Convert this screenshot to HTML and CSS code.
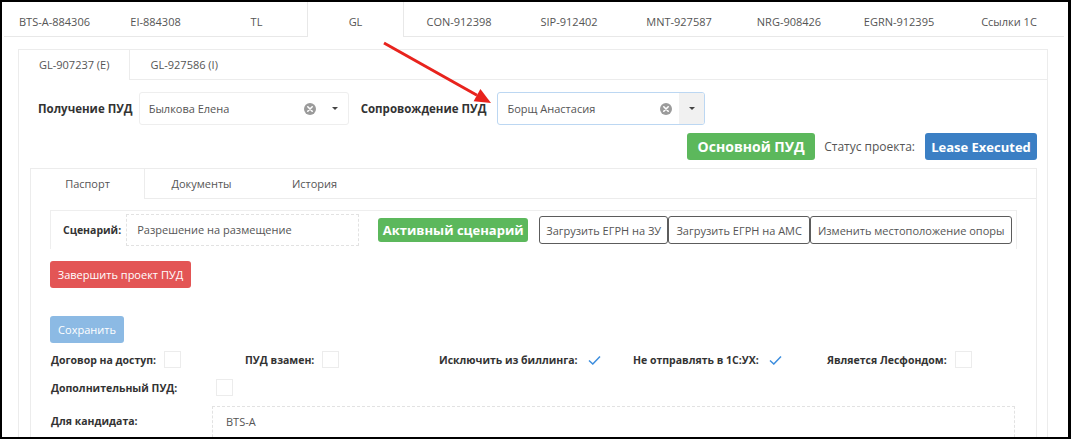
FILE: index.html
```html
<!DOCTYPE html>
<html lang="ru">
<head>
<meta charset="utf-8">
<title>ПУД</title>
<link rel="stylesheet" href="styles.css">
</head>
<body>
<div class="frame">
  <div class="top-tabs">
    <div class="tab t-a">BTS-A-884306</div>
    <div class="tab t-a">EI-884308</div>
    <div class="tab t-a">TL</div>
    <div class="tab t-gl active">GL</div>
    <div class="tab t-b">CON-912398</div>
    <div class="tab t-b">SIP-912402</div>
    <div class="tab t-b">MNT-927587</div>
    <div class="tab t-b">NRG-908426</div>
    <div class="tab t-b">EGRN-912395</div>
    <div class="tab t-b">Ссылки 1С</div>
  </div>

  <div class="sub-box">
    <div class="sub-tabs">
      <div class="stab active">GL-907237 (E)</div>
      <div class="stab">GL-927586 (I)</div>
    </div>

    <div class="assign-row">
      <span class="lbl">Получение ПУД</span>
      <div class="select">
        <span class="sel-text">Былкова Елена</span>
        <span class="clear"><svg width="12" height="12" viewBox="0 0 12 12"><circle cx="6" cy="6" r="6" fill="#9b9b9b"/><path d="M3.8 3.8 L8.2 8.2 M8.2 3.8 L3.8 8.2" stroke="#fff" stroke-width="1.6" stroke-linecap="round"/></svg></span>
        <span class="caret-box"><span class="caret"></span></span>
      </div>
      <span class="lbl lbl2">Сопровождение ПУД</span>
      <div class="select focus">
        <span class="sel-text">Борщ Анастасия</span>
        <span class="clear"><svg width="12" height="12" viewBox="0 0 12 12"><circle cx="6" cy="6" r="6" fill="#9b9b9b"/><path d="M3.8 3.8 L8.2 8.2 M8.2 3.8 L3.8 8.2" stroke="#fff" stroke-width="1.6" stroke-linecap="round"/></svg></span>
        <span class="caret-box grey"><span class="caret"></span></span>
      </div>
    </div>

    <div class="status-row">
      <span class="btn btn-main">Основной ПУД</span>
      <span class="status-lbl">Статус проекта:</span>
      <span class="btn btn-lease">Lease Executed</span>
    </div>

    <div class="panel">
      <div class="panel-tabs">
        <div class="ptab active">Паспорт</div>
        <div class="ptab">Документы</div>
        <div class="ptab">История</div>
      </div>
      <div class="panel-body">
        <div class="scenario">
          <span class="sc-label">Сценарий:</span>
          <span class="sc-input">Разрешение на размещение</span>
          <span class="btn btn-active">Активный сценарий</span>
          <div class="out-group">
            <span class="btn-out w1">Загрузить ЕГРН на ЗУ</span>
            <span class="btn-out w2">Загрузить ЕГРН на АМС</span>
            <span class="btn-out w3">Изменить местоположение опоры</span>
          </div>
        </div>

        <div class="btn-row"><span class="btn btn-red">Завершить проект ПУД</span></div>
        <div class="btn-row save-row"><span class="btn btn-save">Сохранить</span></div>

        <div class="flags">
          <div class="flag"><span class="flbl">Договор на доступ:</span><span class="cb"></span></div>
          <div class="flag"><span class="flbl">ПУД взамен:</span><span class="cb"></span></div>
          <div class="flag"><span class="flbl">Исключить из биллинга:</span><span class="cb checked"><svg width="13" height="10" viewBox="0 0 13 10"><path d="M1 5.5 L4.8 9 L12 1.5" fill="none" stroke="#3d8ede" stroke-width="1.5"/></svg></span></div>
          <div class="flag"><span class="flbl">Не отправлять в 1С:УХ:</span><span class="cb checked"><svg width="13" height="10" viewBox="0 0 13 10"><path d="M1 5.5 L4.8 9 L12 1.5" fill="none" stroke="#3d8ede" stroke-width="1.5"/></svg></span></div>
          <div class="flag"><span class="flbl">Является Лесфондом:</span><span class="cb"></span></div>
        </div>

        <div class="field-row">
          <span class="flbl wide">Дополнительный ПУД:</span><span class="cb cb-extra"></span>
        </div>

        <div class="field-row cand-row">
          <span class="flbl wide">Для кандидата:</span><span class="cand-input">BTS-A</span>
        </div>
      </div>
    </div>
  </div>

  <svg class="arrow" width="600" height="140" viewBox="0 0 600 140">
    <line x1="382" y1="41" x2="475" y2="93.2" stroke="#e8231d" stroke-width="3"/>
    <polygon points="489,101 471.6,99.3 478.4,87.1" fill="#e8231d"/>
  </svg>
</div>
</body>
</html>
```

FILE: styles.css
```css
body {
  margin: 0;
  background: #fff;
}

.frame {
  position: relative;
  width: 1071px;
  height: 439px;
  box-sizing: border-box;
  border: 2px solid #000;
  border-right-width: 3px;
  overflow: hidden;
  background: #fff;
  font-family: "Open Sans", "Noto Sans", sans-serif;
  font-size: 11px;
  color: #555;
}

/* top tabs */
.top-tabs {
  display: flex;
  margin: 0 4px 0 2px;
  height: 34px;
  border-bottom: 1px solid #e8e8e8;
}

.tab {
  text-align: center;
  line-height: 30px;
  padding-top: 5px;
  box-sizing: border-box;
  height: 34px;
  white-space: nowrap;
}

.t-a { width: 101px; }
.t-gl { width: 97px; }
.t-b { flex: 1; }

.tab.active {
  border-left: 1px solid #e8e8e8;
  border-right: 1px solid #e8e8e8;
  background: #fff;
  height: 35px;
}

/* sub box */
.sub-box {
  margin: 12px 20px 0 16px;
  border: 1px solid #ececec;
  border-bottom: none;
  height: 400px;
}

.sub-tabs {
  display: flex;
  height: 29px;
  border-bottom: 1px solid #ececec;
}

.stab {
  padding: 0 20px;
  line-height: 29px;
  white-space: nowrap;
}

.stab.active {
  border-right: 1px solid #ececec;
  background: #fff;
  height: 30px;
}

/* assign row */
.assign-row {
  display: flex;
  align-items: center;
  margin-top: 12px;
  padding-left: 19px;
  height: 33px;
}

.lbl {
  font-weight: 700;
  font-size: 11.5px;
  color: #333;
  margin-right: 6px;
  white-space: nowrap;
}

.lbl2 {
  margin-left: 12px;
  margin-right: 11px;
}

.select {
  display: flex;
  align-items: center;
  width: 210px;
  height: 33px;
  box-sizing: border-box;
  border: 1px solid #eeeeee;
  border-radius: 3px;
}

.select.focus {
  width: 208px;
  border-color: #bcd7f2;
}

.sel-text {
  flex: 1;
  padding-left: 9px;
  white-space: nowrap;
}

.clear {
  display: flex;
  margin-right: 7px;
}

.caret-box {
  width: 25px;
  height: 100%;
  display: flex;
  align-items: center;
  justify-content: center;
}

.caret-box.grey {
  background: #f1f1f1;
  border-radius: 0 2px 2px 0;
}

.caret {
  width: 0;
  height: 0;
  border-left: 3px solid transparent;
  border-right: 3px solid transparent;
  border-top: 3px solid #444;
}

/* status row */
.status-row {
  display: flex;
  align-items: center;
  justify-content: flex-end;
  margin-top: 8px;
  padding-right: 10px;
  height: 27px;
}

.btn {
  display: inline-flex;
  align-items: center;
  justify-content: center;
  color: #fff;
  border-radius: 3px;
  white-space: nowrap;
  box-sizing: border-box;
}

.btn-main {
  background: #5cb85c;
  width: 128px;
  height: 27px;
  font-size: 14px;
  font-weight: 700;
}

.status-lbl {
  margin: 0 10px 0 9px;
  font-size: 12px;
  color: #555;
}

.btn-lease {
  background: #3b7fc4;
  width: 112px;
  height: 27px;
  font-size: 13px;
  font-weight: 700;
}

/* panel */
.panel {
  margin: 8px 10px 0 11px;
  border: 1px solid #ececec;
  border-bottom: none;
  height: 300px;
}

.panel-tabs {
  display: flex;
  height: 29px;
  border-bottom: 1px solid #ececec;
}

.ptab {
  width: 113px;
  text-align: center;
  line-height: 29px;
}

.ptab.active {
  border-right: 1px solid #ececec;
  background: #fff;
  height: 30px;
}

.panel-body {
  padding: 11px 19px 0;
}

.scenario {
  display: flex;
  align-items: center;
  height: 38px;
  border: 1px solid #eeeeee;
  border-bottom: none;
  padding: 0 0 0 12px;
}

.sc-label {
  font-weight: 700;
  font-size: 10.5px;
  color: #333;
  margin-right: 5px;
}

.sc-input {
  width: 233px;
  height: 32px;
  box-sizing: border-box;
  border: 1px dashed #e2e2e2;
  padding-left: 10px;
  line-height: 30px;
}

.btn-active {
  margin-left: 19px;
  background: #5cb85c;
  width: 150px;
  height: 24px;
  font-size: 13px;
  font-weight: 700;
}

.out-group {
  display: flex;
  margin-left: 11px;
}

.btn-out {
  height: 28px;
  box-sizing: border-box;
  border: 1px solid #5c5c5c;
  border-radius: 3px;
  display: inline-flex;
  align-items: center;
  justify-content: center;
  color: #555;
  white-space: nowrap;
}

.w1 { width: 129px; }
.w2 { width: 142px; }
.w3 { width: 202px; }

.btn-row {
  margin-top: 12px;
  display: flex;
}

.btn-red {
  background: #e35555;
  width: 141px;
  height: 27px;
}

.save-row {
  margin-top: 28px;
}

.btn-save {
  background: #8cbae4;
  width: 74px;
  height: 27px;
}

/* flags */
.flags {
  display: grid;
  grid-template-columns: repeat(5, 194px);
  margin-top: 8px;
  margin-left: 1px;
}

.flag {
  display: flex;
  align-items: center;
  gap: 8px;
  height: 17px;
}

.flbl {
  font-weight: 700;
  font-size: 10.5px;
  color: #333;
  white-space: nowrap;
}

.cb {
  width: 17px;
  height: 17px;
  box-sizing: border-box;
  border: 1px solid #ececec;
  display: inline-flex;
  align-items: center;
  justify-content: center;
}

.cb.checked {
  border: none;
}

.field-row {
  display: flex;
  align-items: center;
  margin-top: 11px;
  margin-left: 1px;
}

.wide {
  width: 164px;
}

.cb-extra {
  margin-left: 1px;
}

.cand-row {
  margin-top: 10px;
  align-items: flex-start;
}

.cand-row .wide {
  padding-top: 8px;
  width: 161px;
}

.cand-input {
  width: 803px;
  height: 36px;
  box-sizing: border-box;
  border: 1px dashed #e2e2e2;
  padding: 7px 0 0 13px;
}

/* annotation arrow overlay */
.arrow {
  position: absolute;
  left: 0;
  top: 0;
  pointer-events: none;
}
```
